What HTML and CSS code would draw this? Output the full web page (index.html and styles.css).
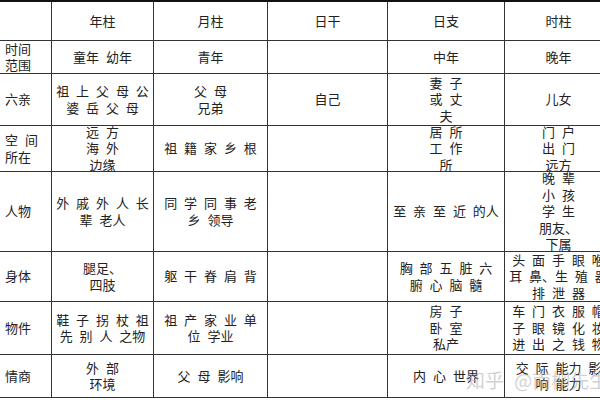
FILE: index.html
```html
<!DOCTYPE html>
<html lang="zh">
<head>
<meta charset="utf-8">
<link rel="stylesheet" href="styles.css">
</head>
<body>
<div class="page">
  <div class="grid">
    <div class="c h"></div>
    <div class="c">年柱</div>
    <div class="c">月柱</div>
    <div class="c">日干</div>
    <div class="c">日支</div>
    <div class="c">时柱</div>

    <div class="c h">时间<br>范围</div>
    <div class="c">童年 幼年</div>
    <div class="c">青年</div>
    <div class="c"></div>
    <div class="c">中年</div>
    <div class="c">晚年</div>

    <div class="c h">六亲</div>
    <div class="c">祖 上 父 母 公<br>婆 岳 父 母</div>
    <div class="c">父 母<br>兄弟</div>
    <div class="c">自己</div>
    <div class="c">妻 子<br>或 丈<br>夫</div>
    <div class="c">儿女</div>

    <div class="c h">空 间<br>所在</div>
    <div class="c">远 方<br>海 外<br>边缘</div>
    <div class="c">祖 籍 家 乡 根</div>
    <div class="c"></div>
    <div class="c">居 所<br>工 作<br>所</div>
    <div class="c">门 户<br>出 门<br>远方</div>

    <div class="c h">人物</div>
    <div class="c">外 戚 外 人 长<br>辈 老人</div>
    <div class="c">同 学 同 事 老<br>乡 领导</div>
    <div class="c"></div>
    <div class="c">至 亲 至 近 的人</div>
    <div class="c">晚 辈<br>小 孩<br>学 生<br>朋友、<br>下属</div>

    <div class="c h">身体</div>
    <div class="c">腿足、<br>四肢</div>
    <div class="c">躯 干 脊 肩 背</div>
    <div class="c"></div>
    <div class="c">胸 部 五 脏 六<br>腑 心 脑 髓</div>
    <div class="c">头 面 手 眼 喉<br>耳 鼻、生 殖 器<br>排 泄 器</div>

    <div class="c h">物件</div>
    <div class="c">鞋 子 拐 杖 祖<br>先 别 人 之物</div>
    <div class="c">祖 产 家 业 单<br>位 学业</div>
    <div class="c"></div>
    <div class="c">房 子<br>卧 室<br>私产</div>
    <div class="c">车 门 衣 服 帽<br>子 眼 镜 化 妆<br>进 出 之 钱 物</div>

    <div class="c h">情商</div>
    <div class="c">外 部<br>环境</div>
    <div class="c">父 母 影响</div>
    <div class="c"></div>
    <div class="c">内 心 世界</div>
    <div class="c">交 际 能力 影<br>响 能力</div>
  </div>
  <div class="watermark">知乎 @南柳先生</div>
</div>
</body>
</html>
```

FILE: styles.css
```css
html, body {
  margin: 0;
  padding: 0;
  background: #fff;
}
.page {
  position: relative;
  width: 600px;
  height: 400px;
  overflow: hidden;
  font-family: "Noto Sans CJK SC", "Noto Sans", sans-serif;
  font-size: 13px;
  color: #222;
}
.grid {
  display: grid;
  width: 612px;
  grid-template-columns: 51px 101px 113px 119px 116px 107px;
  grid-template-rows: 38px 32px 51px 45px 79px 49px 52px 42px;
  gap: 1px;
  background: #333;
  border-top: 2px solid #111;
  border-bottom: 1px solid #333;
}
.c {
  background: #fff;
  display: flex;
  align-items: center;
  justify-content: center;
  text-align: center;
  line-height: 16.5px;
  word-spacing: 4px;
  white-space: nowrap;
  overflow: hidden;
}
.c.h {
  justify-content: flex-start;
  text-align: left;
  padding-left: 5px;
}
.watermark {
  position: absolute;
  left: 466px;
  top: 366px;
  font-size: 19px;
  color: rgba(170, 170, 170, 0.55);
  white-space: nowrap;
  word-spacing: 6px;
}
```
